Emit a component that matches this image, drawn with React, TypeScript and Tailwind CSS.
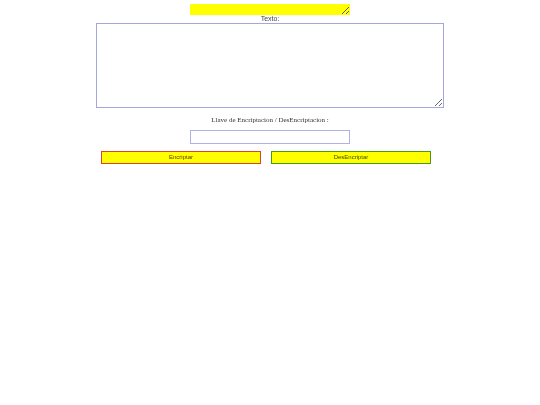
export default function App() {
  return (
    <div className="w-[540px] h-[405px] bg-white flex flex-col items-center pt-[4px]">
      {/* top yellow box */}
      <textarea
        className="block w-[160px] h-[11px] bg-[#ffff00] border-0 outline-none resize-y p-0"
        defaultValue=""
      />
      <div
        className="h-[8px] text-[7px] leading-[8px] text-[#444444]"
        style={{ fontFamily: '"Liberation Sans", Arial, sans-serif' }}
      >
        Texto:
      </div>
      <textarea
        className="block w-[348px] h-[85px] bg-white border border-[#a5a5e0] outline-none resize p-0"
        defaultValue=""
      />
      <div
        className="mt-[7px] h-[10px] text-[7px] leading-[10px] text-[#333333]"
        style={{ fontFamily: '"Liberation Serif", "Times New Roman", serif' }}
      >
        Llave de Encriptacion / DesEncriptacion :
      </div>
      <input
        type="text"
        className="block mt-[5px] w-[160px] h-[14px] bg-white border border-[#b0b0ea] outline-none p-0"
      />
      <div className="flex gap-[10px] mt-[7px] pr-[8px]">
        <button
          className="w-[160px] h-[13px] bg-[#ffff00] border border-[#d8452a] text-[6px] leading-[11px] text-[#5a3a00]"
          style={{ fontFamily: '"Liberation Sans", Arial, sans-serif' }}
        >
          Encriptar
        </button>
        <button
          className="w-[160px] h-[13px] bg-[#ffff00] border border-[#4a9a18] text-[6px] leading-[11px] text-[#3a4a00]"
          style={{ fontFamily: '"Liberation Sans", Arial, sans-serif' }}
        >
          DesEncriptar
        </button>
      </div>
    </div>
  );
}
